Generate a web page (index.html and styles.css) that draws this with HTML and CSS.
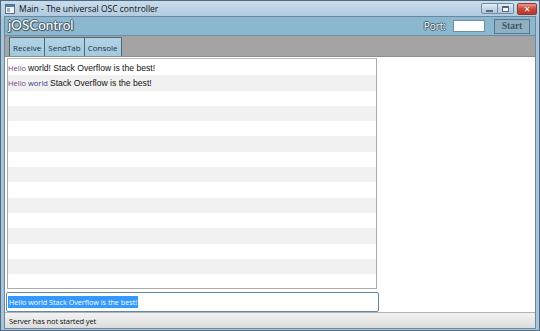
FILE: index.html
```html
<!DOCTYPE html>
<html lang="en">
<head>
    <meta charset="UTF-8">
    <title>Main - The universal OSC controller</title>
    <link rel="stylesheet" href="styles.css">
</head>
<body>
    <div class="window">
        <div class="titlebar">
            <svg class="app-icon" width="10" height="10" viewBox="0 0 10 10">
                <rect x="0.5" y="0.5" width="9" height="9" fill="#f4f7fa" stroke="#56708a"/>
                <rect x="1" y="1" width="8" height="2" fill="#4f7cb0"/>
                <rect x="2" y="4" width="3" height="4" fill="#9db4cc"/>
            </svg>
            <span class="title">Main - The universal OSC controller</span>
            <div class="controls">
                <div class="ctl ctl-min"><span class="min-bar"></span></div>
                <div class="ctl ctl-max"><span class="max-box"></span></div>
                <div class="ctl ctl-close">&#x2715;</div>
            </div>
        </div>

        <div class="client">
            <div class="appbar">
                <span class="brand">jOSControl</span>
                <div class="port">
                    <label class="port-label" for="port">Port:</label>
                    <input class="port-input" id="port" type="text">
                    <button class="start">Start</button>
                </div>
            </div>

            <div class="tabstrip">
                <div class="tab">Receive</div>
                <div class="tab">SendTab</div>
                <div class="tab">Console</div>
            </div>

            <div class="content">
                <div class="main-col">
                    <div class="listbox">
                        <div class="row"><span class="tag">Hello</span> <span class="msg">world! Stack Overflow is the best!</span></div>
                        <div class="row"><span class="tag">Hello</span> <span class="tag tag-blue">world</span> <span class="msg">Stack Overflow is the best!</span></div>
                        <div class="row"></div>
                        <div class="row"></div>
                        <div class="row"></div>
                        <div class="row"></div>
                        <div class="row"></div>
                        <div class="row"></div>
                        <div class="row"></div>
                        <div class="row"></div>
                        <div class="row"></div>
                        <div class="row"></div>
                        <div class="row"></div>
                        <div class="row"></div>
                        <div class="row"></div>
                    </div>
                    <div class="send-box"><span class="selected">Hello world Stack Overflow is the best!</span></div>
                </div>
            </div>

            <div class="statusbar">Server has not started yet</div>
        </div>
    </div>
</body>
</html>
```

FILE: styles.css
```css
:root {
    --frame: #a9c5dc;
    --frame-dark: #4f6a82;
    --appbar: #8cb8cf;
    --strip: #a4a4a4;
    --tab: #a2c9dd;
    --tab-border: #4d6b80;
    --row-alt: #f1f1f1;
    --outline: #46606f;
}

* {
    box-sizing: border-box;
    margin: 0;
    padding: 0;
}

body {
    font-family: 'Open Sans', 'Liberation Sans', sans-serif;
    width: 540px;
    height: 331px;
    overflow: hidden;
    background: #fff;
}

.window {
    width: 540px;
    height: 331px;
    display: flex;
    flex-direction: column;
    background: linear-gradient(#c9dcec, var(--frame) 20px, var(--frame));
    border: 1px solid var(--frame-dark);
    padding: 0 3px 3px 3px;
}

/* title bar */
.titlebar {
    height: 15px;
    display: flex;
    align-items: center;
    flex-shrink: 0;
}

.app-icon {
    margin-left: 1px;
    margin-right: 4px;
}

.title {
    font-size: 8.5px;
    color: #111;
    flex: 1;
}

.controls {
    display: flex;
    align-items: flex-start;
    align-self: flex-start;
    margin-top: 2px;
    margin-right: -1px;
}

.ctl {
    height: 11px;
    display: flex;
    align-items: center;
    justify-content: center;
    border: 1px solid #6f8aa3;
    background: linear-gradient(#e6eef6, #c3d5e6 50%, #b3c8dc);
}

.ctl-min {
    width: 17px;
    border-radius: 2px 0 0 2px;
}

.ctl-max {
    width: 16px;
    border-left: none;
    border-radius: 0 2px 2px 0;
    margin-right: 3px;
}

.ctl-close {
    width: 20px;
    height: 12px;
    border-color: #8a3a33;
    border-radius: 2px;
    background: linear-gradient(#e99a90, #c9463a 50%, #b8382d);
    color: #fff;
    font-size: 8px;
    font-weight: bold;
    font-family: 'DejaVu Sans', sans-serif;
}

.min-bar {
    width: 7px;
    height: 2px;
    margin-top: 4px;
    background: #fff;
    border: 1px solid #55677a;
}

.max-box {
    width: 7px;
    height: 6px;
    border: 1px solid #55677a;
    border-top-width: 2px;
    background: #fff;
}

/* client area */
.client {
    flex: 1;
    display: flex;
    flex-direction: column;
    border: 1px solid #6b879e;
    background: #fff;
}

.appbar {
    height: 19px;
    flex-shrink: 0;
    display: flex;
    align-items: center;
    background: var(--appbar);
    border-bottom: 1px solid #6a8ea3;
}

.brand {
    font-family: Lato, 'Open Sans', sans-serif;
    font-size: 13.5px;
    line-height: 1;
    color: #fff;
    margin-left: 3px;
    text-shadow: -1px 0 0 var(--outline), 1px 0 0 var(--outline), 0 -1px 0 var(--outline), 0 1px 0 var(--outline), 1px 1px 1px var(--outline);
}

.port {
    margin-left: auto;
    display: flex;
    align-items: center;
}

.port-label {
    font-size: 10px;
    color: #f4f7f9;
    text-shadow: -1px 0 0 var(--outline), 1px 0 0 var(--outline), 0 -1px 0 var(--outline), 0 1px 0 var(--outline);
    margin-right: 7px;
}

.port-input {
    width: 32px;
    height: 12px;
    border: 1px solid #6c8ea4;
    background: #fff;
    margin-right: 9px;
}

.start {
    width: 36px;
    height: 15px;
    font-family: 'Liberation Serif', serif;
    font-weight: bold;
    font-size: 9.5px;
    color: #3d5868;
    background: #90afc0;
    border: 1px solid #5a7688;
    margin-right: 5px;
}

/* tab strip */
.tabstrip {
    height: 21px;
    flex-shrink: 0;
    display: flex;
    align-items: flex-end;
    background: var(--strip);
    padding-left: 4px;
    border-bottom: 1px solid #8e8e8e;
}

.tab {
    height: 19px;
    display: flex;
    align-items: center;
    padding: 0 3px;
    font-size: 8px;
    color: #1b3344;
    background: linear-gradient(#b2d3e4, var(--tab));
    border: 1px solid var(--tab-border);
    border-bottom: none;
}

.tab + .tab {
    border-left: none;
}

/* main content */
.content {
    flex: 1;
    display: flex;
    padding: 1px 0 0 1px;
}

.main-col {
    width: 373px;
    display: flex;
    flex-direction: column;
    gap: 3px;
}

.listbox {
    width: 370px;
    height: 231px;
    margin-left: 1px;
    border: 1px solid #aaa;
    border-top-color: #b8b8b8;
    padding-top: 1px;
    overflow: hidden;
}

.row {
    height: 15.3px;
    display: flex;
    align-items: center;
    gap: 2px;
    white-space: nowrap;
}

.row:nth-child(even) {
    background: var(--row-alt);
}

.tag {
    font-size: 7.5px;
    color: #7a3f86;
}

.tag-blue {
    color: #3a3a8a;
}

.msg {
    font-family: 'Liberation Sans', Arial, sans-serif;
    font-size: 8.6px;
    color: #111;
}

.send-box {
    height: 20px;
    border: 1px solid #5f8bab;
    border-radius: 2px;
    display: flex;
    align-items: center;
    padding-left: 1px;
}

.selected {
    font-size: 7.2px;
    background: #3399ff;
    color: #fff;
    padding: 1px 1px;
}

/* status bar */
.statusbar {
    height: 16px;
    flex-shrink: 0;
    display: flex;
    align-items: center;
    padding-left: 4px;
    font-size: 7.6px;
    letter-spacing: -0.15px;
    color: #111;
    background: linear-gradient(#f3f3f3, #dcdcdc);
    border-top: 1px solid #b3b3b3;
}
```
